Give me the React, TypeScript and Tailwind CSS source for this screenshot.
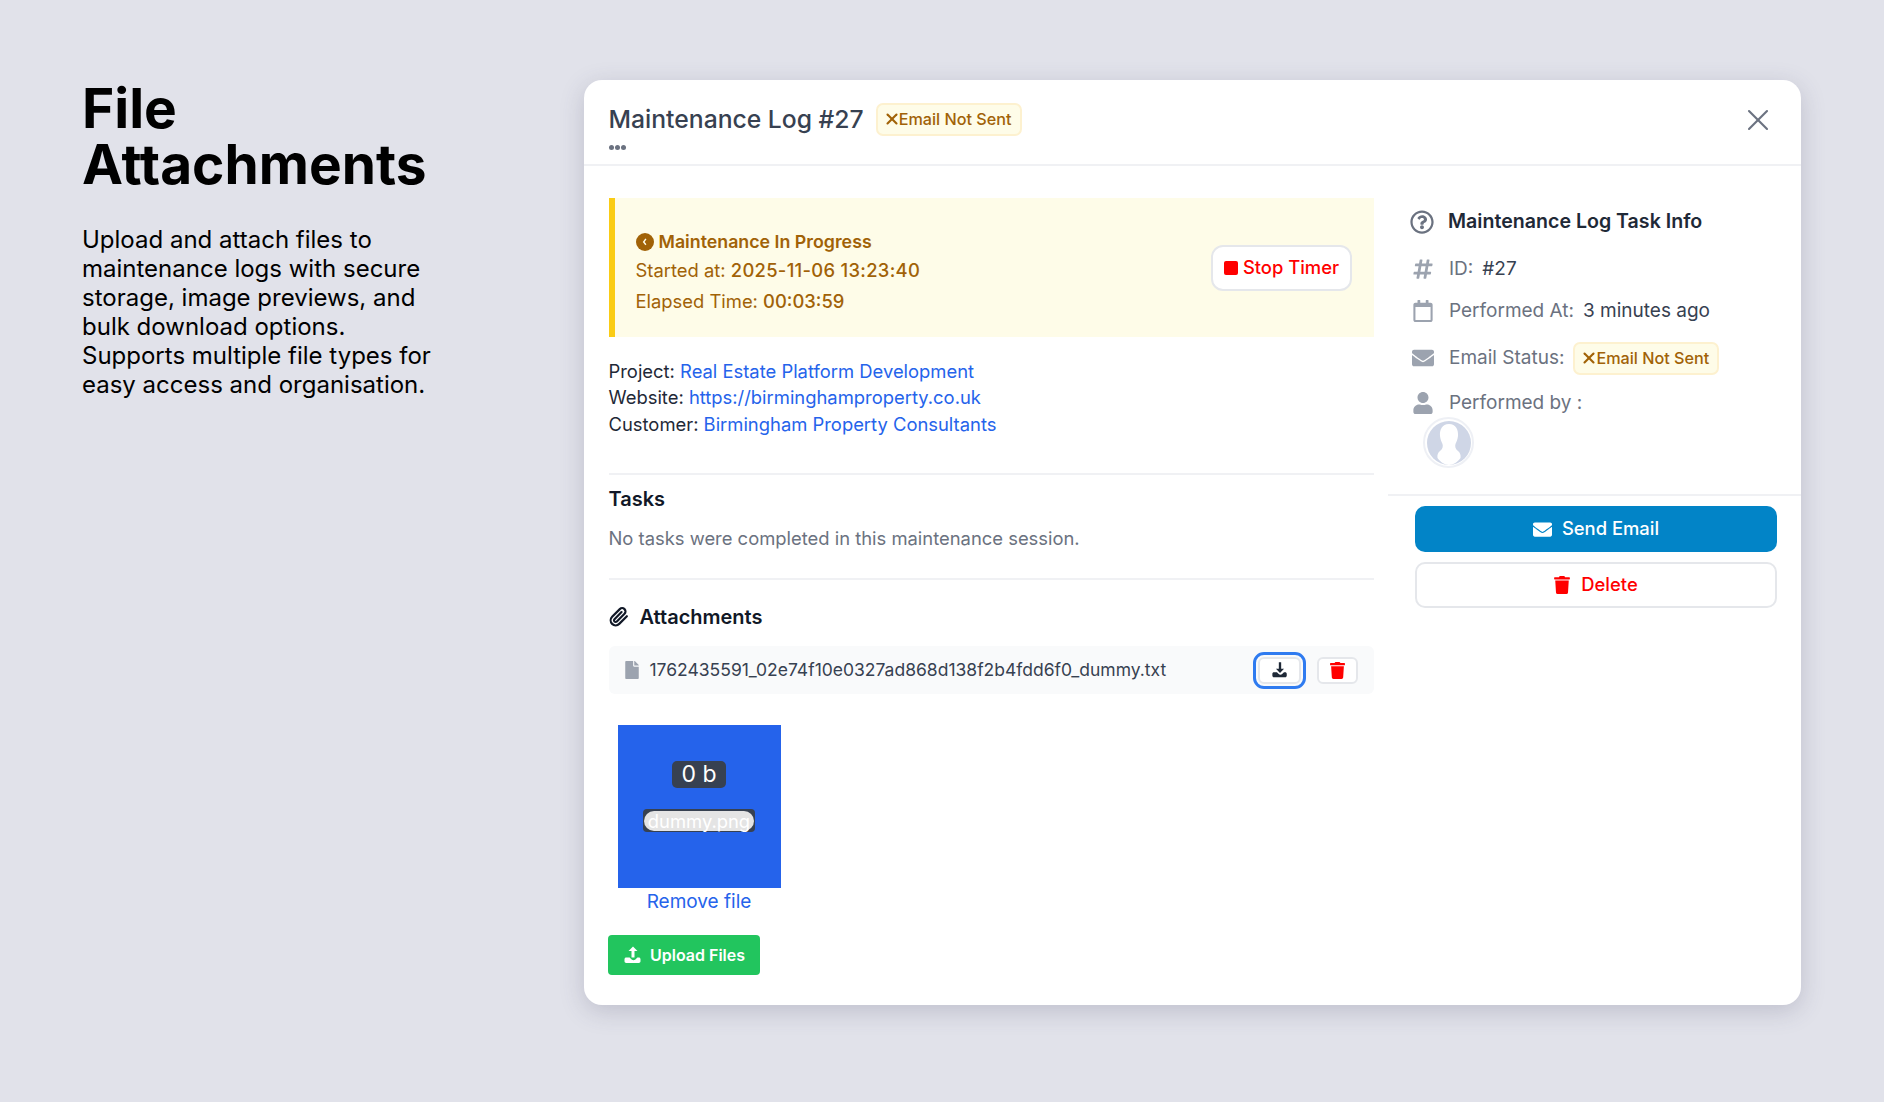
import { FaEnvelope, FaHashtag, FaRegCalendar, FaTrash, FaUser, FaFile, FaRegQuestionCircle } from "react-icons/fa";
import { FiPaperclip } from "react-icons/fi";
import { X } from "lucide-react";

const font = { fontFamily: "Inter, sans-serif" };

function EmailBadge() {
  return (
    <span className="inline-flex items-center h-[33px] w-[146px] pl-[7px] rounded-[7px] border-2 border-[#fdf1cf] bg-[#fefce8] text-[16.2px] font-medium text-[#a16207] whitespace-nowrap">
      <X className="w-[18px] h-[18px] -mx-[2px] shrink-0" strokeWidth={2.8} />
      Email Not Sent
    </span>
  );
}

function TrayArrow({ up, className }: { up?: boolean; className?: string }) {
  return (
    <svg viewBox="0 0 20 20" className={className} fill="currentColor">
      {up ? (
        <path d="M10 1.500 5.500 6h3v6.500h3V6h3L10 1.500Z" />
      ) : (
        <path d="M8.700 1.500h2.600v7h3.200L10 13.200 5.500 8.500h3.200v-7Z" />
      )}
      <path d="M1.500 14.200c0-1 .8-1.700 1.700-1.700h3.400l2 2c.5.5 1.300.8 1.900.8s1.400-.3 1.900-.8l2-2h1.400c.9 0 1.700.7 1.700 1.700v2.100c0 1-.8 1.700-1.700 1.700H3.200c-.9 0-1.700-.7-1.700-1.700v-2.100Z" />
    </svg>
  );
}

function InfoRow({ icon, label, children }: { icon: React.ReactNode; label: string; children?: React.ReactNode }) {
  return (
    <div className="flex items-center text-[19px] leading-[26px]">
      <span className="w-[26px] flex justify-center text-[#9ca3af]">{icon}</span>
      <span className="ml-[13px] text-[#6b7280]">{label}</span>
      {children && <span className="ml-[9px] text-[#374151]">{children}</span>}
    </div>
  );
}

export default function App() {
  return (
    <div className="h-[1102px] bg-[#e1e2ea] flex overflow-hidden" style={font}>
      <div className="w-[584px] shrink-0 pl-[82px] pt-[80px]">
        <h1 className="text-[55px] leading-[56px] font-bold text-black w-[420px]">
          File
          <br />
          Attachments
        </h1>
        <p className="mt-[33px] w-[360px] text-[24px] leading-[29px] text-black">
          Upload and attach files to maintenance logs with secure storage, image previews, and bulk download options. Supports multiple file types for easy access and organisation.
        </p>
      </div>

      <div className="mt-[80px] w-[1217px] h-[925px] bg-white rounded-[18px] shadow-[0_6px_24px_rgba(70,70,100,0.22)] flex flex-col overflow-hidden">
        <div className="h-[86px] shrink-0 border-b-2 border-[#f0f1f4] pl-[24.5px] pr-[25px] flex justify-between">
          <div>
            <div className="flex items-center gap-[12px] pt-[22px]">
              <span className="text-[24.7px] leading-[34px] font-medium text-[#374151]">Maintenance Log #27</span>
              <EmailBadge />
            </div>
            <div className="flex gap-[1px] mt-[9px]">
              <span className="w-[5px] h-[5px] rounded-full bg-[#6b7280]" />
              <span className="w-[5px] h-[5px] rounded-full bg-[#6b7280]" />
              <span className="w-[5px] h-[5px] rounded-full bg-[#6b7280]" />
            </div>
          </div>
          <X className="w-[36px] h-[36px] mt-[22px] text-[#6b7280]" strokeWidth={1.4} />
        </div>

        <div className="flex flex-1">
          <div className="w-[804px] shrink-0 pl-[24.5px] pr-[14px] pt-[32px]">
            <div className="h-[139px] border-l-[6px] border-[#facc15] bg-[#fefce8] pl-[21px] pr-[22px] flex items-center justify-between">
              <div className="text-[18.4px] text-[#a16207] pt-[8px]">
                <div className="flex items-center text-[17.8px] font-semibold leading-[26px] text-[#a16207]">
                  <svg viewBox="0 0 20 20" className="w-[18px] h-[18px] mr-[5px]">
                    <circle cx="10" cy="10" r="10" fill="#a16207" />
                    <path d="M11 6.500 8.500 10l2.500 3" fill="none" stroke="#fefce8" strokeWidth="1.600" />
                  </svg>
                  Maintenance In Progress
                </div>
                <div className="leading-[28px] mt-[1px]">
                  Started at: <span className="font-medium tracking-[0.3px]">2025-11-06 13:23:40</span>
                </div>
                <div className="leading-[28px] mt-[3px]">
                  Elapsed Time: <span className="font-medium">00:03:59</span>
                </div>
              </div>
              <button className="h-[46px] w-[141px] bg-white border-2 border-[#e5e7eb] rounded-[12px] flex items-center justify-center gap-[5px] text-[18.4px] text-[#ff0000] font-medium">
                <span className="w-[14px] h-[14px] rounded-[2px] bg-[#ff0000]" />
                Stop Timer
              </button>
            </div>

            <div className="mt-[21px] text-[18.4px] leading-[26.4px] text-[#1f2937]">
              <div>
                Project: <span className="text-[#2563eb]">Real Estate Platform Development</span>
              </div>
              <div>
                Website: <span className="text-[#2563eb]">https://birminghamproperty.co.uk</span>
              </div>
              <div>
                Customer: <span className="text-[#2563eb]">Birmingham Property Consultants</span>
              </div>
            </div>

            <div className="mt-[36px] border-t-2 border-[#f0f1f4] pt-[10px]">
              <div className="text-[20px] leading-[28px] font-semibold text-[#111827]">Tasks</div>
              <div className="mt-[12px] text-[18.4px] leading-[26px] text-[#6b7280]">No tasks were completed in this maintenance session.</div>
            </div>

            <div className="mt-[27px] border-t-2 border-[#f0f1f4] pt-[23px]">
              <div className="flex items-center gap-[11px]">
                <FiPaperclip className="w-[20px] h-[20px] text-[#111827]" strokeWidth={2.6} />
                <span className="text-[20px] leading-[28px] font-semibold text-[#111827]">Attachments</span>
              </div>
              <div className="mt-[15px] h-[48px] bg-[#f9fafb] rounded-[6px] pl-[16px] pr-[16px] flex items-center">
                <FaFile className="w-[14px] h-[18px] text-[#9ca3af]" />
                <span className="ml-[11px] text-[17.5px] text-[#374151]">1762435591_02e74f10e0327ad868d138f2b4fdd6f0_dummy.txt</span>
                <div className="ml-auto flex items-center gap-[16px]">
                  <button className="w-[43px] h-[27px] bg-white rounded-[6px] border-2 border-[#e5e7eb] outline-3 outline-offset-2 outline-[#2f7bf0] flex items-center justify-center text-[#1f2937]">
                    <TrayArrow className="w-[18px] h-[18px]" />
                  </button>
                  <button className="w-[41px] h-[27px] bg-white rounded-[6px] border-2 border-[#e5e7eb] flex items-center justify-center text-[#ff0000]">
                    <FaTrash className="w-[15px] h-[17px]" />
                  </button>
                </div>
              </div>
              <div className="ml-[9px] mt-[31px] w-[163px]">
                <div className="h-[163px] bg-[#2563eb] flex flex-col items-center pt-[36px]">
                  <span className="h-[27px] px-[9px] rounded-[5px] bg-[#374151] text-[23px] leading-[27px] text-white">0 b</span>
                  <span className="mt-[21px] h-[23px] px-[1px] rounded-[4px] bg-[#374151] flex items-center">
                    <span className="w-[110px] text-center bg-[#e4e4e4] rounded-full text-[18.4px] leading-[20px] text-white whitespace-nowrap">dummy.png</span>
                  </span>
                </div>
                <div className="mt-[1px] -mx-[4px] text-center text-[19px] leading-[26px] text-[#2563eb]">Remove file</div>
              </div>
              <button className="-ml-[0.5px] mt-[20px] w-[152px] h-[40px] bg-[#22c55e] rounded-[4px] flex items-center justify-center gap-[7px] text-white text-[16px] font-semibold">
                <TrayArrow up className="w-[20px] h-[20px]" />
                Upload Files
              </button>
            </div>
          </div>

          <div className="flex-1 pt-[38px]">
            <div className="pl-[22px] h-[290px]">
              <div className="flex items-center gap-[14px] h-[36px]">
                <FaRegQuestionCircle className="w-[24px] h-[24px] text-[#6b7280]" />
                <span className="text-[19.6px] font-semibold text-[#1f2937]">Maintenance Log Task Info</span>
              </div>
              <div className="mt-[8px] flex flex-col">
                <div className="h-[42px] flex items-center">
                  <InfoRow icon={<FaHashtag className="w-[22px] h-[22px]" />} label="ID:">#27</InfoRow>
                </div>
                <div className="h-[42px] flex items-center">
                  <InfoRow icon={<FaRegCalendar className="w-[22px] h-[22px]" />} label="Performed At:">3 minutes ago</InfoRow>
                </div>
                <div className="mt-[1px] h-[50px] flex items-center">
                  <InfoRow icon={<FaEnvelope className="w-[22px] h-[22px]" />} label="Email Status:">
                    <EmailBadge />
                  </InfoRow>
                </div>
                <div className="mt-[5px] h-[30px] flex items-center">
                  <InfoRow icon={<FaUser className="w-[22px] h-[22px]" />} label="Performed by :" />
                </div>
              </div>
              <div className="-mt-[1px] ml-[13px] w-[51px] h-[51px] rounded-full border-2 border-[#eef0f5] bg-white flex items-center justify-center overflow-hidden">
                <svg viewBox="0 0 44 44" className="w-[44px] h-[44px]">
                  <circle cx="22" cy="22" r="22" fill="#cfd6e6" />
                  <path d="M22 3c7 0 9.500 6 9 12-.3 3-1.500 6-2.500 8-.8 2.500 0 5 2.500 7 2 1.500 3 4 2.500 7-3 4-7 7-11.500 7s-8.500-3-11.500-7c-.5-3 .5-5.500 2.500-7 2.500-2 3.300-4.500 2.500-7-1-2-2.200-5-2.500-8-.5-6 2-12 9-12Z" fill="#ffffff" />
                </svg>
              </div>
            </div>
            <div className="border-t-2 border-[#f0f1f4] pl-[27px] pr-[24px] pt-[10px] flex flex-col gap-[10px]">
              <button className="h-[46px] rounded-[10px] bg-[#0284c7] flex items-center justify-center gap-[10px] text-white text-[18.4px] font-medium">
                <FaEnvelope className="w-[19px] h-[19px]" />
                Send Email
              </button>
              <button className="h-[46px] rounded-[10px] bg-white border-2 border-[#e5e7eb] flex items-center justify-center gap-[11px] text-[#ff0000] text-[18.4px] font-medium">
                <FaTrash className="w-[16px] h-[18px]" />
                Delete
              </button>
            </div>
          </div>
        </div>
      </div>
    </div>
  );
}
